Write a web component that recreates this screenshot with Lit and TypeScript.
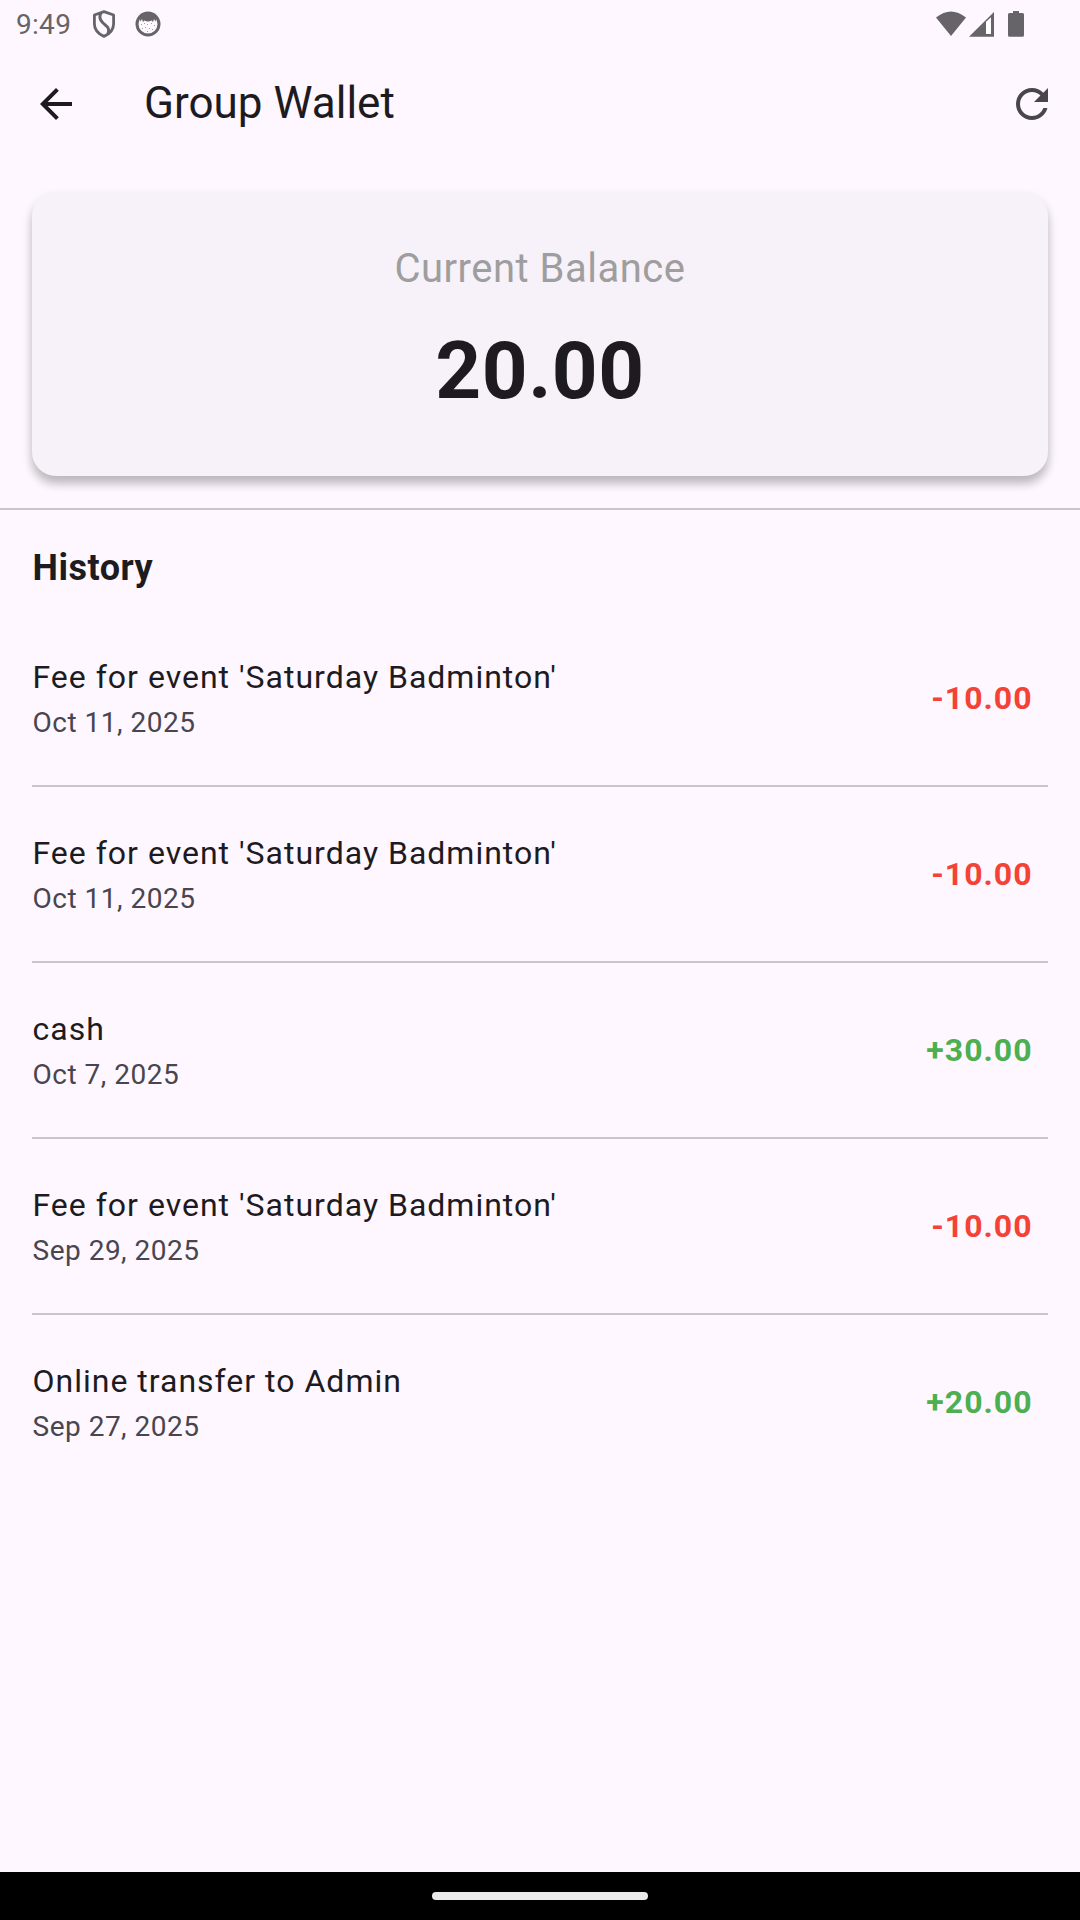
import { LitElement, html, css } from "lit";
import { customElement } from "lit/decorators.js";

interface Entry {
  title: string;
  date: string;
  amount: number;
}

const ENTRIES: Entry[] = [
  { title: "Fee for event 'Saturday Badminton'", date: "Oct 11, 2025", amount: -10 },
  { title: "Fee for event 'Saturday Badminton'", date: "Oct 11, 2025", amount: -10 },
  { title: "cash", date: "Oct 7, 2025", amount: 30 },
  { title: "Fee for event 'Saturday Badminton'", date: "Sep 29, 2025", amount: -10 },
  { title: "Online transfer to Admin", date: "Sep 27, 2025", amount: 20 },
];

@customElement("app-root")
export class AppRoot extends LitElement {
  static styles = css`
    :host {
      display: flex;
      flex-direction: column;
      box-sizing: border-box;
      width: 1080px;
      height: 1920px;
      background: #fef7ff;
      color: #1d1b20;
      font-family: Roboto, "Liberation Sans", sans-serif;
      overflow: hidden;
    }
    svg { display: block; flex: none; }
    .status {
      display: flex;
      align-items: center;
      height: 48px;
      padding: 0 54px 0 16px;
      box-sizing: border-box;
      color: #666468;
      fill: currentColor;
    }
    .time { font-size: 28px; line-height: 48px; width: 76px; padding-top: 2px; letter-spacing: 0.3px; box-sizing: border-box; }
    .shield { margin-right: 19px; }
    .push { flex: 1; }
    .bar {
      display: flex;
      align-items: center;
      height: 112px;
      padding: 0 24px 0 32px;
      box-sizing: border-box;
    }
    .title {
      flex: 1;
      margin: 0 0 2px 64px;
      font-size: 44px;
      line-height: 56px;
      font-weight: 400;
    }
    .refresh { fill: #49454f; }
    .card {
      display: flex;
      flex-direction: column;
      align-items: center;
      gap: 17px;
      box-sizing: border-box;
      height: 284px;
      margin: 32px;
      padding: 48px;
      border-radius: 24px;
      background: #f7f1f9;
      box-shadow: 0 8px 10px rgba(0, 0, 0, 0.2), 0 5px 12px rgba(0, 0, 0, 0.09);
      flex: none;
    }
    .label { font-size: 40px; line-height: 57px; letter-spacing: 0.5px; color: #9e9e9e; }
    .total { font-size: 80px; line-height: 114px; letter-spacing: 0.5px; font-weight: 700; }
    .rule { height: 2px; background: #cac4d0; flex: none; }
    .heading {
      margin: 0;
      padding: 32px 32px 32px 32.5px;
      font-size: 36px;
      line-height: 52px;
      letter-spacing: 0.5px;
      font-weight: 700;
    }
    .list { display: flex; flex-direction: column; flex: 1; margin: 0; padding: 0; list-style: none; }
    .row {
      display: flex;
      align-items: center;
      justify-content: space-between;
      height: 144px;
      padding: 0 47.5px 0 32.5px;
    }
    .split { height: 2px; margin: 15px 32px; background: #cac4d0; }
    .name { font-size: 32px; line-height: 48px; letter-spacing: 1px; }
    .date { margin-top: 2px; font-size: 28px; line-height: 40px; letter-spacing: 0.5px; color: #49454f; }
    .amount { font-size: 32px; line-height: 46px; letter-spacing: 1px; font-weight: 700; color: #f44336; }
    .credit { color: #4caf50; }
    .nav {
      display: flex;
      align-items: center;
      justify-content: center;
      height: 48px;
      background: #000;
      flex: none;
    }
    .handle { width: 216px; height: 8px; border-radius: 4px; background: #ebebeb; }
  `;

  private row(entry: Entry, index: number) {
    const credit = entry.amount > 0;
    return html`
      ${index > 0 ? html`<li class="split" role="separator"></li>` : null}
      <li class="row">
        <div>
          <div class="name">${entry.title}</div>
          <div class="date">${entry.date}</div>
        </div>
        <div class="amount ${credit ? "credit" : ""}">${credit ? "+" : ""}${entry.amount.toFixed(2)}</div>
      </li>
    `;
  }

  render() {
    return html`
      <div class="status">
        <span class="time">9:49</span>
        <svg class="shield" width="24" height="30" viewBox="0 0 24 30" fill="none" stroke="currentColor" stroke-width="2.8" stroke-linejoin="round">
          <path d="M12 2.600 L21.600 6 V15 C21.600 21 18.500 24.500 12 27.400 C5.500 24.500 2.400 21 2.400 15 V6 Z" />
          <path d="M9 4 C6.500 8 8 11 11 14 C15.500 18 18 19 16 25" stroke-width="3" />
        </svg>
        <svg width="26" height="26" viewBox="0 0 26 26">
          <circle cx="13" cy="13" r="11" fill="#fdf8fe" stroke="currentColor" stroke-width="3" />
          <path d="M4 6 C9 0 17 0 22 6 L20.500 10.500 L19 8 L18 11 L16.500 9.500 Q13 11.500 9.500 9.500 L8 11 L7 8 L5.500 10.500 Z" />
          <path d="M6 13h1v1h-1z M9 12h1v1h-1z M12 13h1v1h-1z M16 12h1v1h-1z M19 14h1v1h-1z M7 17h1v1h-1z M10 16h1v1h-1z M14 17h1v1h-1z M17 18h1v1h-1z M12 20h1v1h-1z" opacity=".6" />
        </svg>
        <span class="push"></span>
        <svg width="90" height="28" viewBox="0 0 90 28">
          <path d="M0 7.500 Q15 -4.500 30 7.500 L15 26 Z" />
          <path fill-rule="evenodd" d="M33 26.700 L58 2 V26.700 Z M50 12 V24 H55 V7.500 Z" />
          <path fill="#fff" d="M50 12 L55 7.500 V24 H50 Z" />
          <path d="M77 1 h6 v2 h3.500 q1.500 0 1.500 1.500 v20.700 q0 1.500 -1.500 1.500 h-13 q-1.500 0 -1.500 -1.500 v-20.700 q0 -1.500 1.500 -1.500 h3.500 Z" />
        </svg>
      </div>
      <header class="bar">
        <svg width="48" height="48" viewBox="0 0 24 24" fill="#1d1b20">
          <path d="M20 11H7.830l5.590-5.590L12 4l-8 8 8 8 1.410-1.410L7.830 13H20v-2z" />
        </svg>
        <h1 class="title">Group Wallet</h1>
        <svg class="refresh" width="48" height="48" viewBox="0 0 24 24">
          <path d="M17.650 6.350C16.200 4.900 14.210 4 12 4c-4.420 0-7.990 3.580-7.990 8s3.570 8 7.990 8c3.730 0 6.840-2.550 7.730-6h-2.080c-.82 2.330-3.040 4-5.650 4-3.310 0-6-2.690-6-6s2.690-6 6-6c1.660 0 3.140.69 4.220 1.780L13 11h7V4l-2.350 2.350z" />
        </svg>
      </header>
      <section class="card">
        <div class="label">Current Balance</div>
        <div class="total">20.00</div>
      </section>
      <div class="rule"></div>
      <h2 class="heading">History</h2>
      <ul class="list">${ENTRIES.map((entry, index) => this.row(entry, index))}</ul>
      <div class="nav"><div class="handle"></div></div>
    `;
  }
}
